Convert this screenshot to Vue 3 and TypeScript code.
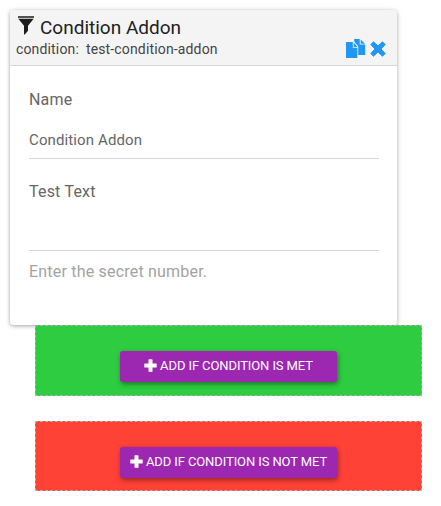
<script setup lang="ts">
import { ref } from 'vue'

interface Branch {
  kind: 'met' | 'unmet'
  label: string
}

const title = 'Condition Addon'
const addonId = 'test-condition-addon'
const name = ref('Condition Addon')
const testText = ref('')
const branches: Branch[] = [
  { kind: 'met', label: 'ADD IF CONDITION IS MET' },
  { kind: 'unmet', label: 'ADD IF CONDITION IS NOT MET' },
]
</script>

<template>
  <main class="page">
    <section class="card">
      <header class="head">
        <div class="title-row">
          <svg class="funnel" viewBox="0 0 16 19" aria-hidden="true">
            <path d="M0 .2h16v1.6H0z" />
            <path d="M.3 2.700h15.400L10 9.800v5L6.800 18.500H6V9.800z" />
          </svg>
          <h1 class="title">{{ title }}</h1>
        </div>
        <div class="sub-row">
          <p class="sub"><span>condition:</span><span>{{ addonId }}</span></p>
          <div class="actions">
            <svg class="copy" viewBox="0 0 20 20" aria-hidden="true">
              <path d="M0 3h6.800v5.800h4.500V19H0z" />
              <path d="M7.700 3.500l3.800 4.400H7.700z" />
              <path d="M8.200 0h5.500v5.600h5.500V16h-7V7.300L8.200 2.600z" />
              <path d="M14.700.4l4.300 4.300h-4.300z" />
            </svg>
            <svg class="close" viewBox="0 0 16 16" aria-hidden="true">
              <path d="M3.500.8L8 5 12.500.8l2.700 2.700L11 8l4.200 4.500-2.700 2.700L8 11l-4.500 4.200-2.700-2.700L5 8 .8 3.500z" />
            </svg>
          </div>
        </div>
      </header>
      <div class="body">
        <label class="field">
          <span class="label">Name</span>
          <input v-model="name" class="input" type="text" />
        </label>
        <label class="field">
          <span class="label">Test Text</span>
          <input v-model="testText" class="input" type="text" />
        </label>
        <p class="hint">Enter the secret number.</p>
      </div>
    </section>
    <section v-for="branch in branches" :key="branch.kind" class="branch" :class="branch.kind">
      <button class="add" type="button">
        <svg class="plus" viewBox="0 0 13 13" aria-hidden="true">
          <path d="M5 .3h3q.5 0 .5.5v3.700h3.700q.5 0 .5.5v3q0 .5-.5.5H8.500v3.700q0 .5-.5.5H5q-.5 0-.5-.5V8.500H.8q-.5 0-.5-.5V5q0-.5.5-.5h3.700V.8q0-.5.5-.5z" />
        </svg>
        <span class="add-label">{{ branch.label }}</span>
      </button>
    </section>
  </main>
</template>

<style>
body {
  background: #fff;
}
</style>

<style scoped>
.page {
  box-sizing: border-box;
  width: 441px;
  height: 506px;
  padding: 10px 19px 0 10px;
  font-family: Roboto, sans-serif;
}
.card {
  box-sizing: border-box;
  width: 387px;
  height: 315px;
  border-radius: 4px;
  background: #fff;
  box-shadow: 0 1px 4px rgba(0, 0, 0, 0.36);
  overflow: hidden;
}
.head {
  box-sizing: border-box;
  height: 56px;
  padding: 6px 11px 0 6px;
  border-bottom: 1px solid #d8d8d8;
  background: #f4f4f4;
}
.title-row {
  display: flex;
  height: 23px;
  align-items: flex-start;
}
.funnel {
  width: 16px;
  height: 19px;
  margin-left: 2px;
  fill: #1d1d1d;
}
.title {
  margin: 0 0 0 6px;
  font-size: 19px;
  font-weight: 400;
  line-height: 24px;
  color: #212121;
}
.sub-row {
  display: flex;
  justify-content: space-between;
}
.sub {
  display: flex;
  gap: 7px;
  margin: 0;
  font-size: 14px;
  line-height: 20px;
  letter-spacing: 0.15px;
  color: #444;
}
.actions {
  display: flex;
  gap: 4px;
  align-items: center;
  height: 20px;
}
.copy {
  width: 20px;
  height: 20px;
  fill: #2196f3;
}
.close {
  width: 16px;
  height: 16px;
  fill: #2196f3;
  stroke: #2196f3;
  stroke-width: 1;
  stroke-linejoin: round;
}
.body {
  padding: 22px 18px 0 19px;
}
.field {
  display: block;
  height: 92px;
}
.label {
  display: block;
  font-size: 16px;
  line-height: 24px;
  letter-spacing: 0.2px;
  color: #666;
}
.input {
  box-sizing: border-box;
  display: block;
  width: 100%;
  height: 36px;
  margin: 11px 0 0;
  padding: 0 0 2px;
  border: 0;
  border-bottom: 1px solid #d4d4d4;
  outline: 0;
  background: transparent;
  font-family: inherit;
  font-size: 15px;
  letter-spacing: 0.12px;
  color: #666;
}
.hint {
  margin: -12px 0 0;
  font-size: 16px;
  line-height: 24px;
  letter-spacing: 0.2px;
  color: #a3a3a3;
}
.branch {
  box-sizing: border-box;
  display: flex;
  justify-content: center;
  width: 387px;
  height: 71px;
  margin-left: 25px;
  padding-top: 25px;
  position: relative;
  border: 1px dashed #b0b0b0;
}
.met {
  background: #2ecc40;
}
.unmet {
  height: 70px;
  margin-top: 25px;
  background: #ff4136;
}
.add {
  display: flex;
  align-items: center;
  justify-content: center;
  gap: 3px;
  width: 217px;
  height: 31px;
  padding: 0 0 2px;
  border: 0;
  border-radius: 3px;
  background: #9c27b0;
  box-shadow: 1px 2px 5px rgba(0, 0, 0, 0.42);
  font-family: inherit;
  font-size: 13px;
  font-weight: 400;
  white-space: nowrap;
  color: #fff;
}
.add-label {
  letter-spacing: -0.1px;
}
.plus {
  width: 13px;
  height: 13px;
  fill: #fff;
}
</style>
